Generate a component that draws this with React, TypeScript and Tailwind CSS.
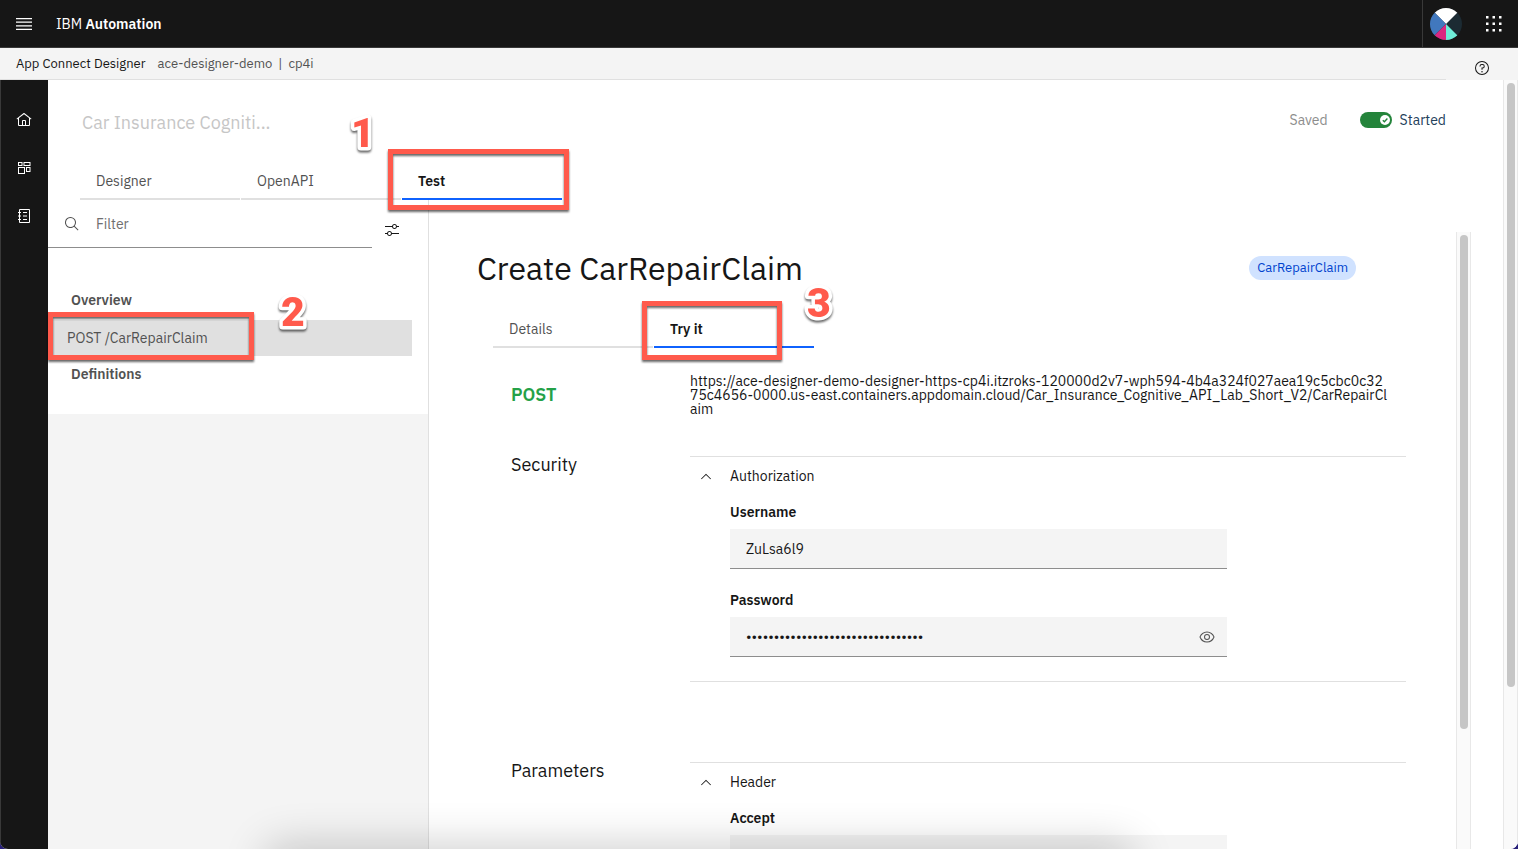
import React, { useState } from "react";

const ICONS = {
  home: "M16.6123,2.2138a1.01,1.01,0,0,0-1.2427,0L1,13.4194l1.2427,1.5717L4,13.6209V26a2.0041,2.0041,0,0,0,2,2H26a2.0037,2.0037,0,0,0,2-2V13.63L29.7573,15,31,13.4282ZM18,26H14V18h4Zm2,0V18a2.0023,2.0023,0,0,0-2-2H14a2.002,2.002,0,0,0-2,2v8H6V12.0615l10-7.79,10,7.8005V26Z",
  catalog:
    "M26,2H8A2,2,0,0,0,6,4V8H4v2H6v5H4v2H6v5H4v2H6v4a2,2,0,0,0,2,2H26a2,2,0,0,0,2-2V4A2,2,0,0,0,26,2Zm0,26H8V24h2V22H8V17h2V15H8V10h2V8H8V4H26Z M14 8h8v2h-8z M14 15h8v2h-8z M14 22h8v2h-8z",
  adjust:
    "M30 8h-4.1c-.5-2.3-2.5-4-4.9-4s-4.4 1.7-4.9 4H2v2h14.1c.5 2.3 2.5 4 4.9 4s4.4-1.7 4.9-4H30V8zM21 12c-1.7 0-3-1.3-3-3s1.3-3 3-3 3 1.3 3 3S22.7 12 21 12zM2 24h4.1c.5 2.3 2.5 4 4.9 4s4.4-1.7 4.9-4H30v-2H15.9c-.5-2.3-2.5-4-4.9-4s-4.4 1.7-4.9 4H2V24zM11 20c1.7 0 3 1.3 3 3s-1.3 3-3 3-3-1.3-3-3S9.3 20 11 20z",
  search:
    "M29,27.5859l-7.5521-7.5521a11.0177,11.0177,0,1,0-1.4141,1.4141L27.5859,29ZM4,13a9,9,0,1,1,9,9A9.01,9.01,0,0,1,4,13Z",
  view: "M30.94,15.66A16.69,16.69,0,0,0,16,5,16.69,16.69,0,0,0,1.06,15.66a1,1,0,0,0,0,.68A16.69,16.69,0,0,0,16,27,16.69,16.69,0,0,0,30.94,16.34,1,1,0,0,0,30.94,15.66ZM16,25c-5.3,0-10.9-3.93-12.93-9C5.1,10.93,10.7,7,16,7s10.9,3.93,12.93,9C26.9,21.07,21.3,25,16,25Z M16,10a6,6,0,1,0,6,6A6,6,0,0,0,16,10Zm0,10a4,4,0,1,1,4-4A4,4,0,0,1,16,20Z",
  chevronUp: "M16 11.5 26 21.5 24.8 22.7 16 13.9 7.2 22.7 6 21.5z",
  help: "M16,2A14,14,0,1,0,30,16,14,14,0,0,0,16,2Zm0,26A12,12,0,1,1,28,16,12,12,0,0,1,16,28Z M17,8H15.5A4.49,4.49,0,0,0,11,12.5V13h2v-.5A2.5,2.5,0,0,1,15.5,10H17a2.5,2.5,0,0,1,0,5H15v4.5h2V17a4.5,4.5,0,0,0,0-9Z M14.5 23.5a1.5 1.5 0 1 0 3 0a1.5 1.5 0 1 0-3 0z",
  boards:
    "M4 4h9v8H4zM6 6v4h5V6zM15 4h14v8H15zM17 6v4h10V6zM4 14h14v14H4zM6 16v10h10V16zM20 14h9v10h-9zM22 16v6h5v-6z",
};

function Icon({ name, className }: { name: keyof typeof ICONS; className: string }) {
  return (
    <svg viewBox="0 0 32 32" fill="currentColor" fillRule="evenodd" aria-hidden="true" className={className}>
      <path d={ICONS[name]} />
    </svg>
  );
}

function Callout({ className }: { className: string }) {
  return (
    <div
      className={`pointer-events-none absolute z-20 border-5 border-[#ff5a4c] [filter:drop-shadow(0_2px_1px_rgb(0_0_0/0.6))] ${className}`}
    />
  );
}

function CalloutNumber({ value, className }: { value: string; className: string }) {
  return (
    <svg
      viewBox="0 0 40 48"
      className={`pointer-events-none absolute z-20 h-12 w-10 overflow-visible [filter:drop-shadow(0_2px_1px_rgb(0_0_0/0.6))] ${className}`}
    >
      <text
        x="20"
        y="38"
        textAnchor="middle"
        fontSize="41"
        fontWeight="900"
        fill="#ff5a4c"
        stroke="#ffffff"
        strokeWidth="7"
        strokeLinejoin="round"
        paintOrder="stroke"
        className="font-['Roboto',sans-serif]"
      >
        {value}
      </text>
    </svg>
  );
}

function Tab({ label, active, onClick }: { label: string; active?: boolean; onClick?: () => void }) {
  return (
    <button
      type="button"
      role="tab"
      aria-selected={!!active}
      onClick={onClick}
      className={`h-10 w-40 border-b-2 px-4 pt-1 text-left text-sm ${
        active ? "border-[#0f62fe] font-semibold text-[#161616]" : "border-[#e0e0e0] text-[#525252]"
      }`}
    >
      {label}
    </button>
  );
}

function Section({ title, group, children }: { title: string; group: string; children: React.ReactNode }) {
  return (
    <section className="flex">
      <h2 className="w-[179px] shrink-0 text-lg leading-[18px] text-[#161616]">{title}</h2>
      <div className="min-w-0 grow border-y border-[#e0e0e0] pb-6">
        <button type="button" aria-expanded="true" className="flex h-[38px] w-full items-center pl-2 text-sm text-[#161616]">
          <Icon name="chevronUp" className="mr-4 size-4" />
          {group}
        </button>
        <div className="flex flex-col gap-3.5 pr-[179px] pl-10">{children}</div>
      </div>
    </section>
  );
}

function Field({
  id,
  label,
  type,
  defaultValue,
  children,
}: {
  id: string;
  label: string;
  type: string;
  defaultValue: string;
  children?: React.ReactNode;
}) {
  return (
    <div>
      <label htmlFor={id} className="block py-2 text-sm leading-[18px] font-semibold text-[#161616]">
        {label}
      </label>
      <div className="flex h-10 items-center border-b border-[#8d8d8d] bg-[#f4f4f4]">
        <input
          id={id}
          type={type}
          defaultValue={defaultValue}
          className="h-full min-w-0 grow bg-transparent px-4 text-sm text-[#161616] outline-none"
        />
        {children}
      </div>
    </div>
  );
}

function Scrollbar({ className, thumb }: { className: string; thumb: string }) {
  return (
    <div aria-hidden="true" className={`w-[15px] shrink-0 border-x border-[#e8e8e8] bg-[#fafafa] ${className}`}>
      <div className={`mx-auto w-2 rounded-full bg-[#c6c6c6] ${thumb}`} />
    </div>
  );
}

export default function App() {
  const [tab, setTab] = useState("Test");
  const [view, setView] = useState("Try it");
  return (
    <div className="h-screen bg-[#28207a] font-['IBM_Plex_Sans',Roboto,sans-serif] text-[#161616]">
      <div className="relative flex h-full flex-col overflow-hidden rounded-b-lg bg-white">
        <header className="flex h-12 shrink-0 items-center border-b border-[#393939] bg-[#161616] text-white">
          <button type="button" aria-label="Menu" className="flex size-12 items-center justify-center">
            <svg viewBox="0 0 20 20" fill="currentColor" className="size-5">
              <path d="M2 14.8h16V16H2zm0-3.6h16v1.2H2zm0-3.6h16v1.2H2zM2 4h16v1.2H2z" />
            </svg>
          </button>
          <a href="#home" className="ml-2 text-sm">
            IBM <span className="font-semibold">Automation</span>
          </a>
          <button
            type="button"
            aria-label="Account"
            className="ml-auto flex h-full w-12 items-center justify-center shadow-[inset_1px_0_0_#393939]"
          >
            <svg viewBox="0 0 32 32" className="size-8">
              <clipPath id="avatar">
                <circle cx="16" cy="16" r="16" />
              </clipPath>
              <g clipPath="url(#avatar)">
                <rect width="32" height="32" fill="#1c2b33" />
                <path d="M16 16 4 4V-2H28V4z" fill="#ffffff" />
                <path d="M16 16 4 4H-2V28H4z" fill="#4178be" />
                <path d="M16 16 4 28v6H16z" fill="#db2780" />
                <path d="M16 16 28 28v6H16z" fill="#6eedd8" />
              </g>
            </svg>
          </button>
          <button type="button" aria-label="Switch application" className="flex size-12 items-center justify-center">
            <svg viewBox="0 0 32 32" fill="currentColor" className="size-4">
              <path d="M0 0h5v5H0zM13 0h5v5h-5zM26 0h5v5h-5zM0 13h5v5H0zM13 13h5v5h-5zM26 13h5v5h-5zM0 26h5v5H0zM13 26h5v5h-5zM26 26h5v5h-5z" />
            </svg>
          </button>
        </header>

        <div className="flex h-8 shrink-0 bg-[#f4f4f4] text-[13px]">
          <nav aria-label="Breadcrumb" className="flex grow items-center border-b border-[#e0e0e0] pl-4">
            <span className="mr-3">App Connect Designer</span>
            <span className="text-[#525252]">ace-designer-demo</span>
            <span className="mx-1.5 text-[#525252]">|</span>
            <span className="text-[#525252]">cp4i</span>
          </nav>
          <button type="button" aria-label="Help" className="flex w-[72px] items-center justify-center pt-2">
            <Icon name="help" className="size-4" />
          </button>
        </div>

        <div className="flex min-h-0 grow">
          <nav
            aria-label="Main"
            className="flex w-12 shrink-0 flex-col items-center gap-8 bg-[#161616] pt-8 text-white shadow-[inset_1px_0_0_#393939]"
          >
            <a href="#dashboard" aria-label="Dashboard"><Icon name="home" className="size-4" /></a>
            <a href="#integrations" aria-label="Integrations"><Icon name="boards" className="size-4" /></a>
            <a href="#catalog" aria-label="Catalog"><Icon name="catalog" className="size-4" /></a>
          </nav>

          <main className="flex min-w-0 grow flex-col">
            <div className="flex h-20 shrink-0 items-center pr-[57px] pl-[34px]">
              <h1 className="grow pt-1.5 text-lg text-[#c6c6c6]">Car Insurance Cogniti...</h1>
              <span className="mr-8 text-sm text-[#8d8d8d]">Saved</span>
              <label className="flex cursor-pointer items-center text-sm text-[#23405a]">
                <input type="checkbox" role="switch" defaultChecked className="peer sr-only" />
                <svg viewBox="0 0 32 16" className="mr-2 h-4 w-8">
                  <rect width="32" height="16" rx="8" fill="#24843b" />
                  <circle cx="25" cy="8" r="5" fill="#ffffff" />
                  <path d="m22.8 8.2 1.6 1.6 3-3.2" fill="none" stroke="#24843b" strokeWidth="1.4" />
                </svg>
                Started
              </label>
            </div>

            <div role="tablist" className="relative flex h-10 shrink-0 gap-px pl-8">
              {["Designer", "OpenAPI", "Test"].map((name) => (
                <Tab key={name} label={name} active={tab === name} onClick={() => setTab(name)} />
              ))}
              <Callout className="-top-[11px] left-[340px] h-[61px] w-[181px]" />
              <CalloutNumber value="1" className="-top-[51px] left-[295px]" />
            </div>

            <div className="flex min-h-0 grow">
              <aside className="w-[381px] shrink-0 border-r border-[#e0e0e0] bg-[#f4f4f4]">
                <div className="bg-white pb-[22px]">
                  <div className="flex items-center">
                    <label className="flex h-12 w-[324px] items-center border-b border-[#8d8d8d] pl-4 text-[#525252]">
                      <Icon name="search" className="mr-4 size-4" />
                      <input
                        type="search"
                        aria-label="Filter"
                        placeholder="Filter"
                        className="w-60 text-sm outline-none placeholder:text-[#6f6f6f]"
                      />
                    </label>
                    <button type="button" aria-label="Filter settings" className="ml-3 pt-3">
                      <Icon name="adjust" className="size-4" />
                    </button>
                  </div>
                  <nav aria-label="Operations" className="relative pt-8 text-sm text-[#525252]">
                    <a href="#overview" className="flex h-10 items-center pl-[23px] font-semibold">Overview</a>
                    <a href="#post" className="mr-4 flex h-9 items-center bg-[#e0e0e0] pl-[19px]">POST /CarRepairClaim</a>
                    <a href="#definitions" className="flex h-9 items-center pl-[23px] font-semibold">Definitions</a>
                    <Callout className="top-16 left-0 h-12 w-[206px]" />
                    <CalloutNumber value="2" className="top-10 left-[225px]" />
                  </nav>
                </div>
              </aside>

              <div className="min-w-0 grow overflow-hidden pt-12 pr-[50px] pl-12">
                <div className="flex items-center justify-between pr-[50px]">
                  <h2 className="text-[32px] leading-10">Create CarRepairClaim</h2>
                  <span className="flex h-6 items-center rounded-full bg-[#d0e2ff] px-2 text-[13px] text-[#0043ce]">
                    CarRepairClaim
                  </span>
                </div>
                <div role="tablist" className="relative ml-4 flex gap-px pt-5">
                  {["Details", "Try it"].map((name) => (
                    <Tab key={name} label={name} active={view === name} onClick={() => setView(name)} />
                  ))}
                  <Callout className="top-[13px] left-[149px] h-[59px] w-[140px]" />
                  <CalloutNumber value="3" className="-top-[9px] left-[306px]" />
                </div>
                <div className="pt-[26px] pl-[34px]">
                  <div className="flex">
                    <div className="w-[179px] shrink-0 pt-[11px] text-lg leading-5 font-semibold text-[#24a148]">POST</div>
                    <p className="min-w-0 pr-4 text-sm leading-[14px] break-all">
                      https://ace-designer-demo-designer-https-cp4i.itzroks-120000d2v7-wph594-4b4a324f027aea19c5cbc0c3275c4656-0000.us-east.containers.appdomain.cloud/Car_Insurance_Cognitive_API_Lab_Short_V2/CarRepairClaim
                    </p>
                  </div>
                  <div className="flex flex-col gap-20 pt-10">
                    <Section title="Security" group="Authorization">
                      <Field id="username" label="Username" type="text" defaultValue="ZuLsa6l9" />
                      <Field id="password" label="Password" type="password" defaultValue="abcdefghijklmnopqrstuvwxyz012345">
                        <button type="button" aria-label="Show password" className="mr-3 text-[#525252]">
                          <Icon name="view" className="size-4" />
                        </button>
                      </Field>
                    </Section>
                    <Section title="Parameters" group="Header">
                      <Field id="accept" label="Accept" type="text" defaultValue="" />
                    </Section>
                  </div>
                </div>
              </div>
              <Scrollbar className="mt-8 mr-8" thumb="mt-[3px] h-[494px]" />
            </div>
          </main>
          <Scrollbar className="" thumb="mt-[3px] h-[604px]" />
        </div>
        <div className="pointer-events-none absolute top-full right-[390px] left-[270px] h-10 rounded-lg shadow-[0_0_44px_4px_rgb(0_0_0/0.2)]" />
      </div>
    </div>
  );
}
